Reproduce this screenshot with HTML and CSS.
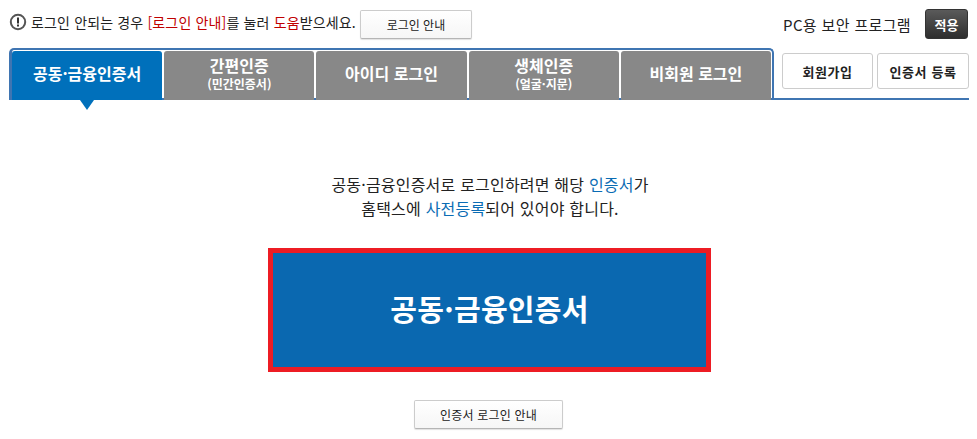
FILE: index.html
```html
<!DOCTYPE html>
<html lang="ko">
<head>
    <meta charset="UTF-8">
    <title>공동·금융인증서 로그인</title>
    <link rel="stylesheet" href="styles.css">
</head>
<body>
    <div class="login-wrap">
        <div class="top-bar">
            <svg class="notice-icon" width="18" height="18" viewBox="0 0 18 18">
                <circle cx="9" cy="9" r="7.2" fill="none" stroke="#555" stroke-width="2"/>
                <rect x="8" y="4.5" width="2" height="6" fill="#333"/>
                <rect x="8" y="11.5" width="2" height="2" fill="#333"/>
            </svg>
            <p class="notice-text">로그인 안되는 경우 <span class="red">[로그인 안내]</span>를 눌러 <span class="red">도움</span>받으세요.</p>
            <button class="btn btn-guide">로그인 안내</button>
            <div class="security">
                <span class="security-label">PC용 보안 프로그램</span>
                <button class="btn-apply">적용</button>
            </div>
        </div>

        <div class="tab-row">
            <ul class="tabs">
                <li class="tab active">공동·금융인증서</li>
                <li class="tab">간편인증<small>(민간인증서)</small></li>
                <li class="tab">아이디 로그인</li>
                <li class="tab">생체인증<small>(얼굴·지문)</small></li>
                <li class="tab">비회원 로그인</li>
            </ul>
            <div class="tab-side">
                <button class="btn-side">회원가입</button>
                <button class="btn-side">인증서 등록</button>
            </div>
        </div>

        <div class="content">
            <p class="desc">공동·금융인증서로 로그인하려면 해당 <span class="blue">인증서</span>가<br>홈택스에 <span class="blue">사전등록</span>되어 있어야 합니다.</p>
            <button class="cert-button">공동·금융인증서</button>
            <button class="btn btn-cert-guide">인증서 로그인 안내</button>
        </div>
    </div>
</body>
</html>
```
FILE: styles.css
```css
* {
    margin: 0;
    padding: 0;
    box-sizing: border-box;
}

html, body {
    height: 439px;
    overflow: hidden;
}

body {
    font-family: "Noto Sans CJK KR", "Noto Sans", sans-serif;
    background: #ffffff;
    color: #222222;
}

.login-wrap {
    width: 977px;
    padding: 9px 8px 0 9px;
}

/* top notice bar */
.top-bar {
    display: flex;
    align-items: center;
    height: 30px;
}

.notice-icon {
    flex: none;
    margin-right: 4px;
    margin-top: -5px;
}

.notice-text {
    font-size: 14px;
    letter-spacing: 0.15px;
    margin-top: -5px;
    color: #222222;
    white-space: nowrap;
}

.red {
    color: #c00000;
}

.blue {
    color: #0a6cb4;
}

.btn {
    font-family: inherit;
    font-size: 12px;
    color: #222222;
    background: linear-gradient(#ffffff, #f6f6f6);
    border: 1px solid #cccccc;
    border-bottom-color: #b5b5b5;
    border-radius: 2px;
    box-shadow: 0 1px 1px rgba(0, 0, 0, 0.12);
}

.btn-guide {
    width: 112px;
    height: 29px;
    margin-left: 4px;
}

.security {
    display: flex;
    align-items: center;
    margin-left: auto;
    padding-right: 1px;
}

.security-label {
    font-size: 15px;
    letter-spacing: 0.35px;
    color: #222222;
    margin-right: 14px;
}

.btn-apply {
    width: 43px;
    height: 30px;
    font-family: inherit;
    font-size: 13px;
    font-weight: 700;
    color: #ffffff;
    background: linear-gradient(#5a5a5a, #2e2e2e);
    border: 1px solid #333333;
    border-radius: 3px;
}

/* tabs */
.tab-row {
    display: flex;
    height: 52px;
    margin-top: 9px;
    border-bottom: 2px solid #3f75b2;
}

.tabs {
    display: flex;
    gap: 2px;
    width: 765px;
    height: 52px;
    flex: none;
    list-style: none;
    padding: 1px 1px 0 0;
    border: 2px solid #3f75b2;
    border-left-width: 3px;
    border-bottom: none;
    border-radius: 5px 5px 0 0;
}

.tab {
    position: relative;
    display: flex;
    flex: 1;
    flex-direction: column;
    align-items: center;
    justify-content: center;
    height: 49px;
    padding-bottom: 5px;
    font-size: 16px;
    font-weight: 700;
    line-height: 20px;
    color: #ffffff;
    background: #888888;
    border-radius: 3px 3px 0 0;
}

.tab small {
    font-size: 12px;
    line-height: 17px;
}

.tab.active {
    background: #0070bb;
}

.tab.active::after {
    content: "";
    position: absolute;
    top: 100%;
    left: 68px;
    border-top: 10px solid #0070bb;
    border-left: 7px solid transparent;
    border-right: 7px solid transparent;
}

.tab-side {
    display: flex;
    gap: 4px;
    margin-left: 8px;
    padding-top: 5px;
}

.btn-side {
    width: 91px;
    height: 36px;
    font-family: inherit;
    font-size: 13px;
    font-weight: 700;
    letter-spacing: 0.6px;
    color: #222222;
    background: #ffffff;
    border: 1px solid #cccccc;
    border-radius: 3px;
}

.btn-side + .btn-side {
    width: 92px;
}

/* main content */
.content {
    display: flex;
    flex-direction: column;
    align-items: center;
    width: 977px;
    margin-left: -9px;
    padding-top: 72px;
}

.desc {
    font-size: 16px;
    letter-spacing: 0.2px;
    line-height: 24px;
    text-align: center;
    color: #222222;
    margin-left: 3px;
}

.cert-button {
    width: 443px;
    height: 124px;
    margin-top: 28px;
    margin-left: 2px;
    padding-bottom: 5px;
    font-family: inherit;
    font-size: 29px;
    letter-spacing: 0.3px;
    font-weight: 700;
    color: #ffffff;
    background: #0a68b0;
    border: 5px solid #ed1c24;
}

.btn-cert-guide {
    width: 149px;
    height: 29px;
    margin-top: 28px;
    letter-spacing: 0.2px;
}
```
